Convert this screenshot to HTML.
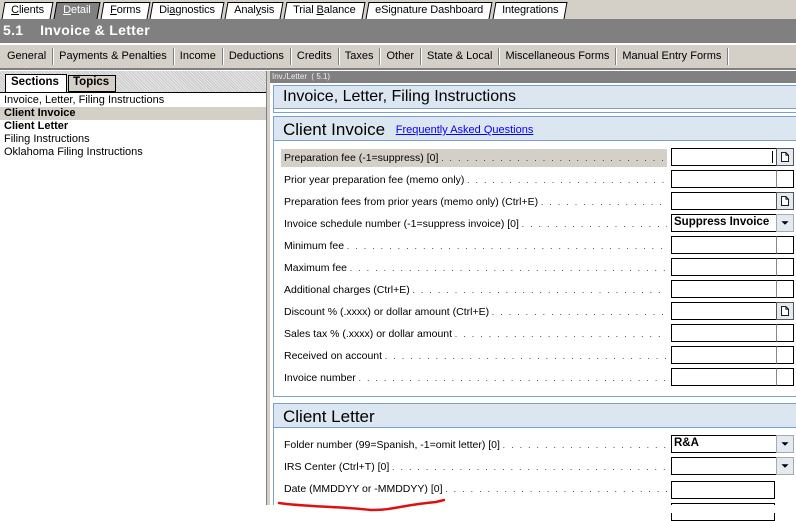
<!DOCTYPE html>
<html><head><meta charset="utf-8"><style>
*{margin:0;padding:0;box-sizing:border-box}
body{width:796px;height:513px;overflow:hidden;background:#fff;font-family:"Liberation Sans",Tahoma,sans-serif;font-size:11px;color:#000;position:relative}
.a{position:absolute}
.tabs{left:0;top:0;width:796px;height:19px;background:#d4d0c8;display:flex;padding-left:3px;align-items:flex-end}
.tab{height:17px;border:1px solid #000;border-bottom:none;background:#fff;padding:1px 7px 0 7px;font-size:11px;letter-spacing:-0.1px;transform:skewX(-10deg);margin-right:3px;white-space:nowrap}
.tab span{display:inline-block;transform:skewX(10deg)}
.title{left:0;top:19px;width:796px;height:24px;background:#808080;color:#fff;font-weight:bold;font-size:14px;padding:3px 0 0 3px;letter-spacing:.3px}
.menu{left:0;top:45px;width:796px;height:25px;background:#d4d0c8;border-bottom:2px solid #808080;font-size:11px;display:flex;align-items:center;padding-left:1px}
.menu span{padding:0 6px;border-right:1px solid #808080;box-shadow:1px 0 0 #fff;height:17px;line-height:17px;white-space:nowrap}
.hatch{background:repeating-linear-gradient(45deg,#c8c8c8 0 1px,#e8e8e8 1px 2px)}
.list div{height:13px;line-height:13px;padding-left:4px;font-size:11px;white-space:nowrap}
.row{position:absolute;left:281px;width:386px;height:18px;line-height:18px;padding-left:3px;white-space:nowrap;overflow:hidden;font-size:10.5px}
.row:after{content:" .  .  .  .  .  .  .  .  .  .  .  .  .  .  .  .  .  .  .  .  .  .  .  .  .  .  .  .  .  .  .  .  .  .  .  .  .  .  .  .  .  .  .  .  .  .  .  .  .  .  .  .  .  .  .  .  .  .  .  .  .  .  .  .  .  .  .  .  .  .  .  .  .  .  .  .  .  .  .";white-space:pre;font-size:8px;letter-spacing:0.6px}
.fld{position:absolute;left:671px;width:105px;height:18px;border:1px solid #000;border-width:1px 0 1px 1px;background:#fff}
.btn{position:absolute;left:776px;width:18px;height:18px;border:1px solid #000;border-left:1px solid #888;background:#fff}
.b2{background:#e4eaf2;border:1px solid #555}
.sect{left:273px;width:523px;border:1px solid #7a9fd0;border-right:none;background:#dce6f0;font-size:17px;padding:3px 0 0 9px}
</style></head><body>
<div class="a tabs">
<div class="tab"><span><u>C</u>lients</span></div>
<div class="tab" style="background:#808080;color:#fff"><span><u>D</u>etail</span></div>
<div class="tab"><span><u>F</u>orms</span></div>
<div class="tab"><span>Di<u>a</u>gnostics</span></div>
<div class="tab"><span>Anal<u>y</u>sis</span></div>
<div class="tab"><span>Trial <u>B</u>alance</span></div>
<div class="tab"><span>eSignature Dashboard</span></div>
<div class="tab"><span>Integrations</span></div>
</div>
<div class="a title">5.1&nbsp;&nbsp;&nbsp;&nbsp;Invoice &amp; Letter</div>
<div class="a menu">
<span>General</span><span>Payments &amp; Penalties</span><span>Income</span><span>Deductions</span><span>Credits</span><span>Taxes</span><span>Other</span><span>State &amp; Local</span><span>Miscellaneous Forms</span><span>Manual Entry Forms</span>
</div>
<div class="a hatch" style="left:0;top:71px;width:266px;height:22px"></div>
<div class="a" style="left:5px;top:74px;width:62px;height:19px;border:1px solid #000;border-bottom:none;background:#fff;font-weight:bold;font-size:11.5px;padding:1px 0 0 5px">Sections</div>
<div class="a" style="left:68px;top:75px;width:48px;height:17px;border:1px solid #000;background:#d4d0c8;font-weight:bold;font-size:11.5px;padding:0 0 0 4px">Topics</div>
<div class="a" style="left:0;top:92px;width:266px;height:1px;background:#000"></div>
<div class="a list" style="left:0;top:94px;width:266px">
<div>Invoice, Letter, Filing Instructions</div>
<div style="background:#d4d0c8;font-weight:bold">Client Invoice</div>
<div style="font-weight:bold">Client Letter</div>
<div>Filing Instructions</div>
<div>Oklahoma Filing Instructions</div>
</div>
<div class="a" style="left:266px;top:71px;width:4px;height:442px;background:#d4d0c8;border-left:1px solid #808080"></div>
<div class="a" style="left:270px;top:71px;width:526px;height:12px;background:#808080;color:#eee;font-size:8px;padding:1px 0 0 2px">Inv./Letter&nbsp; ( 5.1)</div>
<div class="a" style="left:270px;top:83px;width:3px;height:430px;background:#fff"></div>
<div class="a" style="left:273px;top:85px;width:523px;height:24px;border:1px solid #7a9fd0;border-right:none;background:#dce6f0;font-size:16px;padding:2px 0 0 9px">Invoice, Letter, Filing Instructions</div>
<div class="a" style="left:273px;top:108px;width:523px;height:5px;border-left:1px solid #7a9fd0;border-bottom:1px solid #7a9fd0"></div>
<div class="a sect" style="top:116px;height:25px">Client Invoice <a style="font-size:11px;color:#00f;text-decoration:underline;margin-left:6px;vertical-align:2px">Frequently Asked Questions</a></div>
<div class="a" style="left:273px;top:141px;width:1px;height:255px;background:#7a9fd0"></div>
<div class="a" style="left:273px;top:396px;width:523px;height:1px;background:#7a9fd0"></div>
<div class="a sect" style="top:403px;height:25px">Client Letter</div>
<div class="a" style="left:273px;top:428px;width:1px;height:85px;background:#7a9fd0"></div>

<div class="row" style="top:149px;background:#d4d0c8">Preparation fee (-1=suppress) [0]</div>
<div class="row" style="top:171px">Prior year preparation fee (memo only)</div>
<div class="row" style="top:193px">Preparation fees from prior years (memo only) (Ctrl+E)</div>
<div class="row" style="top:215px">Invoice schedule number (-1=suppress invoice) [0]</div>
<div class="row" style="top:237px">Minimum fee</div>
<div class="row" style="top:259px">Maximum fee</div>
<div class="row" style="top:281px">Additional charges (Ctrl+E)</div>
<div class="row" style="top:303px">Discount % (.xxxx) or dollar amount (Ctrl+E)</div>
<div class="row" style="top:325px">Sales tax % (.xxxx) or dollar amount</div>
<div class="row" style="top:347px">Received on account</div>
<div class="row" style="top:369px">Invoice number</div>
<div class="row" style="top:436px">Folder number (99=Spanish, -1=omit letter) [0]</div>
<div class="row" style="top:458px">IRS Center (Ctrl+T) [0]</div>
<div class="row" style="top:480px">Date (MMDDYY or -MMDDYY) [0]</div>

<svg width="0" height="0" style="position:absolute"><defs>
<symbol id="pg" viewBox="0 0 18 18"><path d="M5 4h5l3 3v7H5z M10 4v3h3" fill="#fff" stroke="#000" stroke-width="1"/></symbol>
<symbol id="dd" viewBox="0 0 18 18"><path d="M5 7h8l-4 4z" fill="#000"/></symbol></defs></svg>

<div class="fld" style="top:148px"><div class="a" style="left:100px;top:2px;width:1px;height:12px;background:#000"></div></div><div class="btn b2" style="top:148px"><svg width="16" height="16"><use href="#pg"/></svg></div>
<div class="fld" style="top:170px"></div><div class="btn" style="top:170px"></div>
<div class="fld" style="top:192px"></div><div class="btn b2" style="top:192px"><svg width="16" height="16"><use href="#pg"/></svg></div>
<div class="fld" style="top:214px;font-weight:bold;font-size:11.5px;padding:1px 0 0 2px;white-space:nowrap;overflow:hidden">Suppress Invoice</div><div class="btn b2" style="top:214px;border-color:#aaa"><svg width="16" height="16"><use href="#dd"/></svg></div>
<div class="fld" style="top:236px"></div><div class="btn" style="top:236px"></div>
<div class="fld" style="top:258px"></div><div class="btn" style="top:258px"></div>
<div class="fld" style="top:280px"></div><div class="btn" style="top:280px"></div>
<div class="fld" style="top:302px"></div><div class="btn b2" style="top:302px"><svg width="16" height="16"><use href="#pg"/></svg></div>
<div class="fld" style="top:324px"></div><div class="btn" style="top:324px"></div>
<div class="fld" style="top:346px"></div><div class="btn" style="top:346px"></div>
<div class="fld" style="top:368px"></div><div class="btn" style="top:368px"></div>
<div class="fld" style="top:435px;font-weight:bold;font-size:11.5px;padding:1px 0 0 2px">R&amp;A</div><div class="btn b2" style="top:435px;border-color:#aaa"><svg width="16" height="16"><use href="#dd"/></svg></div>
<div class="fld" style="top:457px"></div><div class="btn b2" style="top:457px;border-color:#aaa"><svg width="16" height="16"><use href="#dd"/></svg></div>
<div class="fld" style="top:481px;border-right:1px solid #000;width:104px"></div>
<div class="fld" style="top:503px;border-right:1px solid #000;width:104px"></div>
<div class="a" style="left:0;top:505px;width:796px;height:8px;background:#fff"></div>
<svg class="a" style="left:276px;top:490px" width="170" height="23"><path d="M3 13 C30 17 60 16 95 20 C120 20 125 15 160 12 L168 10" fill="none" stroke="#e01010" stroke-width="2.5" stroke-linecap="round"/></svg>
</body></html>
